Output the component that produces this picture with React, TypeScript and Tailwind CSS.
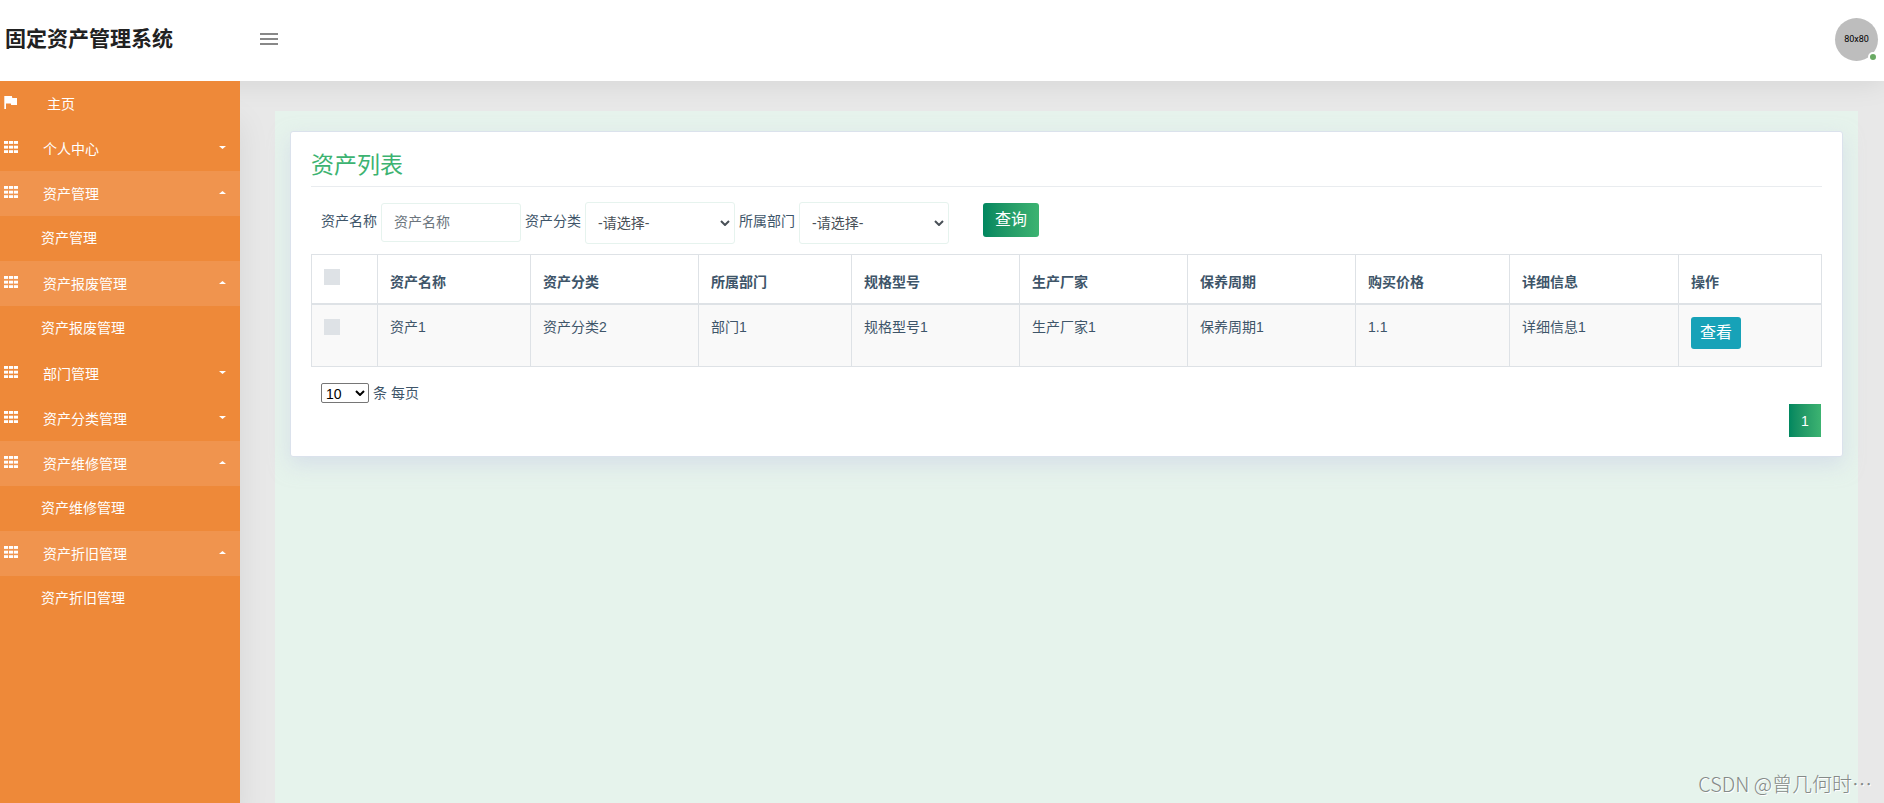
import { useState } from "react";

type MenuEntry = { label: string; open: boolean; children: string[] };

const MENU: MenuEntry[] = [
  { label: "个人中心", open: false, children: [] },
  { label: "资产管理", open: true, children: ["资产管理"] },
  { label: "资产报废管理", open: true, children: ["资产报废管理"] },
  { label: "部门管理", open: false, children: [] },
  { label: "资产分类管理", open: false, children: [] },
  { label: "资产维修管理", open: true, children: ["资产维修管理"] },
  { label: "资产折旧管理", open: true, children: ["资产折旧管理"] },
];

const COLUMNS = [
  { label: "资产名称", width: "w-[153px]" },
  { label: "资产分类", width: "w-[168px]" },
  { label: "所属部门", width: "w-[153px]" },
  { label: "规格型号", width: "w-[168px]" },
  { label: "生产厂家", width: "w-[168px]" },
  { label: "保养周期", width: "w-[168px]" },
  { label: "购买价格", width: "w-[154px]" },
  { label: "详细信息", width: "w-[169px]" },
  { label: "操作", width: "w-[143px]" },
];

const ROWS = [
  ["资产1", "资产分类2", "部门1", "规格型号1", "生产厂家1", "保养周期1", "1.1", "详细信息1"],
];

function GridIcon() {
  return (
    <svg viewBox="0 0 14 12" className="h-3 w-3.5 shrink-0 fill-white" aria-hidden="true">
      {[0, 4.7, 9.2].map((y) =>
        [0, 5, 9.9].map((x) => <rect key={`${x}-${y}`} x={x} y={y} width="4.1" height="2.900" />),
      )}
    </svg>
  );
}

function FlagIcon() {
  return (
    <svg viewBox="0 0 13 13" className="h-[13px] w-[13px] shrink-0 fill-white" aria-hidden="true">
      <path d="M0.300 0h7.600l.4 1.900h4.700v7.100H7.200l-.4-1.500H2V13H0.300z" />
    </svg>
  );
}

function Caret({ up }: { up: boolean }) {
  return (
    <svg viewBox="0 0 7 3" className="h-[3px] w-[7px] fill-white" aria-hidden="true">
      <path d={up ? "M0 3h7L3.500 0z" : "M0 0h7L3.500 3z"} />
    </svg>
  );
}

function Chevron({ className }: { className: string }) {
  return (
    <svg viewBox="0 0 10 6" className={`pointer-events-none absolute h-1.5 w-2.5 ${className}`} aria-hidden="true">
      <path d="M1 1l4 4 4-4" fill="none" stroke="currentColor" strokeWidth="2" />
    </svg>
  );
}

function FilterSelect({ id, label }: { id: string; label: string }) {
  return (
    <>
      <label htmlFor={id} className="mt-[9px] leading-5">
        {label}
      </label>
      <div className="relative">
        <select
          id={id}
          className="h-[42px] w-[150px] appearance-none rounded-[3px] border border-[#e6f3ee] bg-white px-3 text-[#495057]"
        >
          <option>-请选择-</option>
        </select>
        <Chevron className="right-[5px] top-[18px] text-[#495057]" />
      </div>
    </>
  );
}

function Sidebar() {
  const [menu, setMenu] = useState(MENU);
  const toggle = (i: number) => setMenu(menu.map((m, n) => (n === i ? { ...m, open: !m.open } : m)));
  return (
    <nav className="z-20 w-60 shrink-0 bg-[#ee8939] text-white shadow-[10px_30px_30px_-10px_rgba(0,0,0,0.08)]">
      <a href="#home" className="flex h-[45px] items-center pb-[3px] pl-1">
        <FlagIcon />
        <span className="ml-[30px] pt-[3px]">主页</span>
      </a>
      {menu.map((item, i) => (
        <div key={item.label}>
          <button
            type="button"
            aria-expanded={item.open}
            onClick={() => toggle(i)}
            className={`flex h-[45px] w-full items-center pb-[3px] pl-1 pr-3.5 ${item.open ? "bg-[#f0944e]" : ""}`}
          >
            <GridIcon />
            <span className="ml-[25px] flex-1 pt-[3px] text-left">{item.label}</span>
            <Caret up={item.open} />
          </button>
          {item.open &&
            item.children.map((c) => (
              <a key={c} href="#list" className="flex h-[45px] items-center pb-0.5 pl-[41px]">
                {c}
              </a>
            ))}
        </div>
      ))}
    </nav>
  );
}

export default function App() {
  return (
    <div className="relative flex min-h-screen flex-col bg-[#e8e8e8] font-['Liberation_Sans','Noto_Sans_CJK_SC',sans-serif] text-sm text-[#3e5569]">
      <header className="z-10 flex h-[81px] items-center bg-white shadow-[0_0_30px_rgba(0,0,0,0.1)]">
        <h1 className="w-[260px] pb-1 pl-[5px] text-[21px] font-bold text-[#212121]">固定资产管理系统</h1>
        <button type="button" aria-label="菜单" className="flex flex-col gap-[3px] pb-1">
          <span className="h-0.5 w-[18px] bg-[#888]" />
          <span className="h-0.5 w-[18px] bg-[#888]" />
          <span className="h-0.5 w-[18px] bg-[#888]" />
        </button>
        <div className="relative mb-0.5 ml-auto mr-1.5 flex h-[43px] w-[43px] items-center justify-center rounded-full bg-[#bdbdbd] font-['Roboto',sans-serif] text-[9px] text-black">
          80x80
          <span className="absolute -bottom-px right-0 h-2.5 w-2.5 rounded-full border-2 border-white bg-[#6aaa64]" />
        </div>
      </header>

      <div className="flex flex-1">
        <Sidebar />
        <main className="flex min-w-0 flex-1 pl-[35px] pr-[26px] pt-[30px]">
          <div className="min-w-0 flex-1 bg-[#e6f3ec] px-[15px] pt-5">
            <section className="rounded-[3px] border border-[#dbe2ec] bg-white px-5 pb-[19px] pt-[18px] shadow-[0_8px_20px_rgba(200,205,230,0.5)]">
              <h2 className="border-b border-[#e9ecef] pb-1.5 text-[23px] leading-[30px] text-[#3cb371]">资产列表</h2>

              <form className="flex flex-wrap items-start gap-1 pl-2.5 pt-[15px]" onSubmit={(e) => e.preventDefault()}>
                <label htmlFor="name" className="mt-[9px] leading-5">
                  资产名称
                </label>
                <input
                  id="name"
                  placeholder="资产名称"
                  className="mt-px h-[39px] w-[140px] rounded-[3px] border border-[#e6f3ee] px-3 pb-0.5 placeholder:text-[#6c757d]"
                />
                <FilterSelect id="category" label="资产分类" />
                <FilterSelect id="department" label="所属部门" />
                <button
                  type="submit"
                  className="ml-[30px] mt-px h-[34px] rounded-[3px] bg-linear-to-r from-[#00875f] to-[#3cb371] px-3 text-base text-white"
                >
                  查询
                </button>
              </form>

              <table className="mt-2.5 w-full table-fixed border-collapse border border-[#dee2e6] text-left">
                <thead>
                  <tr className="h-[49px] border-b-2 border-[#dee2e6]">
                    <th className="w-[66px] px-3 pt-3.5 align-top">
                      <input type="checkbox" aria-label="全选" className="block h-4 w-4 appearance-none bg-[#dee2e6]" />
                    </th>
                    {COLUMNS.map((c) => (
                      <th
                        key={c.label}
                        className={`border-l border-[#dee2e6] px-3 pb-[11px] align-bottom leading-5 ${c.width}`}
                      >
                        {c.label}
                      </th>
                    ))}
                  </tr>
                </thead>
                <tbody>
                  {ROWS.map((row) => (
                    <tr key={row[0]} className="h-[63px] bg-[#f9f9f9] align-top">
                      <td className="px-3 pt-3.5">
                        <input
                          type="checkbox"
                          aria-label={row[0]}
                          className="block h-4 w-4 appearance-none bg-[#dee2e6]"
                        />
                      </td>
                      {row.map((cell) => (
                        <td key={cell} className="border-l border-[#dee2e6] px-3 pt-3 leading-5">
                          {cell}
                        </td>
                      ))}
                      <td className="border-l border-[#dee2e6] px-3 pt-3">
                        <button type="button" className="block h-8 rounded-[3px] bg-[#17a2b8] px-[9px] text-base text-white">
                          查看
                        </button>
                      </td>
                    </tr>
                  ))}
                </tbody>
              </table>

              <div className="mt-4 flex items-center gap-1 pl-2.5">
                <div className="relative">
                  <select
                    id="size"
                    className="block h-5 w-12 appearance-none rounded-xs border border-[#767676] bg-white pl-1 text-black"
                  >
                    <option>10</option>
                  </select>
                  <Chevron className="right-1 top-[7px] text-black" />
                </div>
                <label htmlFor="size">条 每页</label>
              </div>
              <div className="mt-px flex justify-end pr-px">
                <button type="button" className="h-[33px] w-8 bg-linear-to-r from-[#00875f] to-[#3cb371] text-white">
                  1
                </button>
              </div>
            </section>
          </div>
        </main>
      </div>

      <p className="absolute bottom-1 right-3 z-30 font-['Noto_Sans_CJK_SC',sans-serif] text-[20px] font-light leading-[30px] text-[#858a88] [text-shadow:1px_1px_0_#fff]">
        CSDN @曾几何时⋯
      </p>
    </div>
  );
}
